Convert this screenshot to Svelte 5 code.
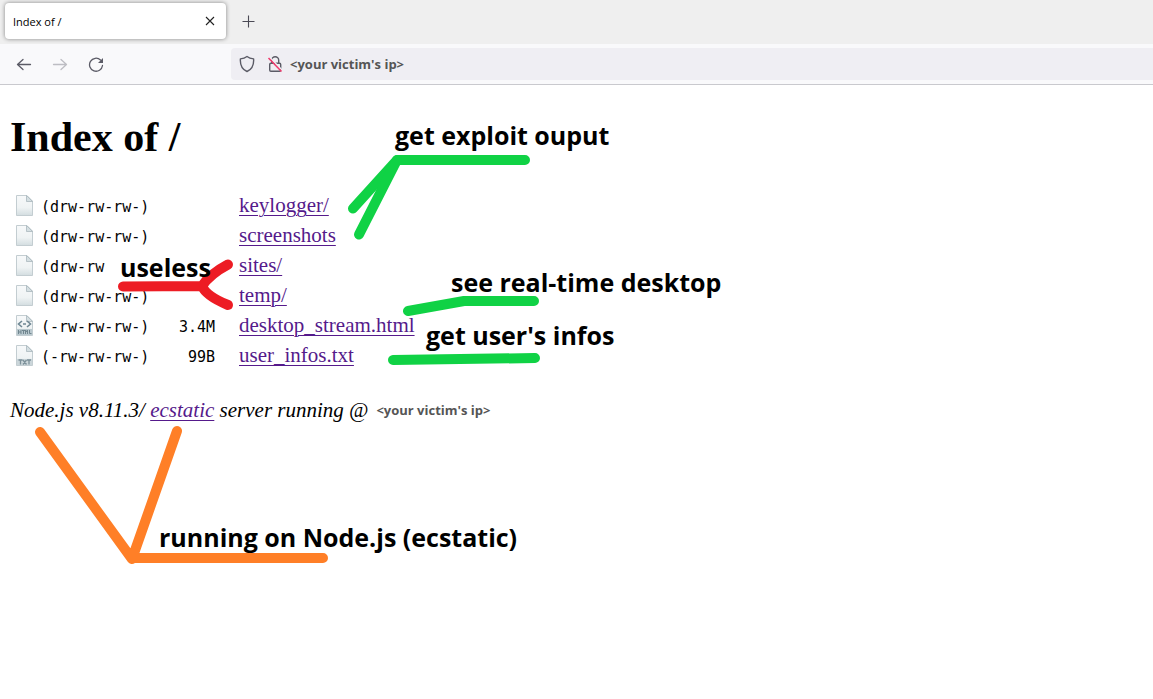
<script>
  const files = [
    { kind: 'file', perms: '(drw-rw-rw-)', size: '', name: 'keylogger/' },
    { kind: 'file', perms: '(drw-rw-rw-)', size: '', name: 'screenshots' },
    { kind: 'file', perms: '(drw-rw', size: '', name: 'sites/' },
    { kind: 'file', perms: '(drw-rw-rw-)', size: '', name: 'temp/' },
    { kind: 'html', perms: '(-rw-rw-rw-)', size: '3.4M', name: 'desktop_stream.html' },
    { kind: 'txt', perms: '(-rw-rw-rw-)', size: '99B', name: 'user_infos.txt' }
  ];

  const notes = [
    { text: 'get exploit ouput', x: 395, y: 117 },
    { text: 'useless', x: 120, y: 249 },
    { text: 'see real-time desktop', x: 451, y: 264 },
    { text: "get user's infos", x: 426, y: 317 },
    { text: 'running on Node.js (ecstatic)', x: 159, y: 519 }
  ];

  let address = $state("<your victim's ip>");
</script>

<div class="page">
  <header>
    <div class="tabs">
      <div class="tab">
        <span>Index of /</span>
        <button aria-label="Close tab">
          <svg width="10" height="10" viewBox="0 0 10 10"><path d="M1 1l8 8M9 1l-8 8" stroke="#222" stroke-width="1.1" fill="none" /></svg>
        </button>
      </div>
      <button class="new" aria-label="New tab">
        <svg width="13" height="13" viewBox="0 0 13 13"><path d="M6.500 .5v12M.5 6.500h12" stroke="#4b4a55" stroke-width="1.1" fill="none" /></svg>
      </button>
    </div>
    <nav class="toolbar">
      <div class="controls">
        <button aria-label="Back">
          <svg width="16" height="16" viewBox="0 0 16 16" fill="none" stroke="#5b5b66" stroke-width="1.3" stroke-linecap="round" stroke-linejoin="round"><path d="M14.500 8.500H1.500M7 3.500L1.500 8.500L7 13.500" /></svg>
        </button>
        <button aria-label="Forward" disabled>
          <svg width="16" height="16" viewBox="0 0 16 16" fill="none" stroke="#bdbdc3" stroke-width="1.3" stroke-linecap="round" stroke-linejoin="round"><path d="M1.500 8.500h13M9 3.500L14.500 8.500L9 13.500" /></svg>
        </button>
        <button aria-label="Reload">
          <svg width="16" height="16" viewBox="0 0 16 16" fill="none" stroke="#5b5b66" stroke-width="1.3" stroke-linecap="round"><path d="M14.500 9.500A6.500 6.500 0 1 1 12.500 4" /><path d="M15 2v5h-5z" fill="#5b5b66" stroke="none" /></svg>
        </button>
      </div>
      <div class="urlbar">
        <svg width="16" height="18" viewBox="0 0 16 18" fill="none" stroke="#5b5b66" stroke-width="1.4" stroke-linejoin="round"><path d="M8 1.500C6 3 3.800 3.600 1.400 3.900C1 9.500 3 14.300 8 16.500C13 14.300 15 9.500 14.600 3.900C12.200 3.600 10 3 8 1.500Z" /></svg>
        <svg width="16" height="18" viewBox="0 0 16 18" fill="none" stroke="#5b5b66" stroke-width="1.4"><rect x="2.700" y="8.200" width="11" height="8" rx="1.200" /><path d="M4.700 8V5.200a3.500 3.500 0 0 1 7 0V8" /><path d="M2.500 2L15.500 15.500" stroke="#efeef3" stroke-width="1.500" /><path d="M1.500 3L14.500 16.500" stroke="#f0386b" stroke-width="1.500" /></svg>
        <input type="text" aria-label="Address" bind:value={address} />
      </div>
    </nav>
  </header>

  <main>
    <h1>Index of /</h1>
    <table>
      <tbody>
        {#each files as f}
          <tr>
            <td class="icon">
              <svg width="17" height="21" viewBox="0 0 17 21">
                <defs>
                  <linearGradient id="paper" x1="0" y1="0" x2="0" y2="1">
                    <stop offset="0" stop-color="#f7f9fa" /><stop offset="0.600" stop-color="#eff3f4" /><stop offset="1" stop-color="#d3dde0" />
                  </linearGradient>
                </defs>
                <path d="M.5.5H11L16.500 6V20.500H.5Z" fill="url(#paper)" stroke="#c3cdd1" />
                <path d="M10.500.5V6.500H16.500Z" fill="#d5dfe2" stroke="#a9b8be" stroke-width="0.800" />
                {#if f.kind === 'html'}
                  <path d="M1 14h15v6H1z" fill="#b9c8ce" />
                  <path d="M6 6L2.500 9L6 12M11 6L14.500 9L11 12M7 9h3" fill="none" stroke="#6f8793" stroke-width="1.600" />
                  <path d="M2.500 15v4M5 15v4M2.500 17H5M6 15.500h3M7.500 15.500V19M9.500 19v-4l1 2l1-2v4M13.500 15v3.500h2" fill="none" stroke="#71868f" />
                {:else if f.kind === 'txt'}
                  <path d="M1 14h15v6H1z" fill="#cbd6da" />
                  <path d="M2.500 15h4M4.500 15v4.500M7 15l3.500 4.500M10.500 15L7 19.500M11 15h4M13 15v4.500" fill="none" stroke="#7d919a" stroke-width="1.300" />
                {/if}
              </svg>
            </td>
            <td class="perms">{f.perms}</td>
            <td class="size">{f.size}</td>
            <td class="name"><a href="#{f.name}">{f.name}</a></td>
          </tr>
        {/each}
      </tbody>
    </table>
    <address>
      <span>Node.js v8.11.3/ <a href="#ecstatic">ecstatic</a> server running @</span>
      <b>&lt;your victim's ip&gt;</b>
    </address>
  </main>

  <svg class="marks" fill="none" stroke-width="10" stroke-linecap="round" stroke-linejoin="round" aria-hidden="true">
    <g stroke="#10d245">
      <path d="M353 208.500L397 160H525" />
      <path d="M359 234.500L397 160" />
      <path d="M408 311L464 301L534 301" />
      <path d="M393 360L535 358" />
    </g>
    <path stroke="#ed1c24" d="M123 286.500L202 286Q210 274 228 264.500M202 286Q206 296 228 305" />
    <path stroke="#ff7f27" d="M40 432L132 559L177 431M132 558H323" />
  </svg>
  {#each notes as n}
    <span class="note" style="left: {n.x}px; top: {n.y}px">{n.text}</span>
  {/each}
</div>

<style>
  :global(body) {
    margin: 0;
    background: #fff;
  }
  .page {
    position: relative;
    min-height: 100vh;
    overflow: hidden;
    color: #000;
    font-family: "Liberation Serif", serif;
  }
  button {
    display: flex;
    align-items: center;
    justify-content: center;
    padding: 0;
    border: 0;
    background: none;
  }
  .tabs {
    display: flex;
    align-items: center;
    gap: 12px;
    height: 44px;
    box-sizing: border-box;
    padding: 0 5px 2px;
    background: #efefef;
  }
  .tab {
    display: flex;
    align-items: center;
    justify-content: space-between;
    width: 221px;
    height: 36px;
    box-sizing: border-box;
    padding: 0 8px;
    border-radius: 4px;
    background: #fff;
    box-shadow: 0 0 4px rgba(0, 0, 0, 0.45);
    font: 11px "Open Sans", sans-serif;
  }
  .tab button {
    width: 16px;
    height: 16px;
  }
  .new {
    width: 20px;
    height: 20px;
  }
  .toolbar {
    display: flex;
    align-items: center;
    height: 40px;
    background: #f9f9fb;
    border-bottom: 1px solid #c9c9ce;
  }
  .controls {
    display: flex;
    gap: 20px;
    width: 231px;
    box-sizing: border-box;
    padding-left: 16px;
  }
  .urlbar {
    display: flex;
    flex: 1;
    align-items: center;
    gap: 12px;
    height: 32px;
    box-sizing: border-box;
    padding-left: 8px;
    border-radius: 4px 0 0 4px;
    background: #efeef3;
  }
  .urlbar input {
    flex: 1;
    margin-left: -5px;
    padding: 0;
    border: 0;
    outline: 0;
    background: none;
    color: #555;
    font: bold 13px "Open Sans", sans-serif;
  }
  main {
    padding: 28px 10px;
  }
  h1 {
    margin: 0;
    font-size: 42px;
    line-height: 48px;
  }
  table {
    margin-top: 29px;
    border-collapse: collapse;
    font-size: 21px;
  }
  td {
    height: 30px;
    padding: 0;
    line-height: 30px;
    vertical-align: baseline;
  }
  .icon {
    width: 31px;
    vertical-align: middle;
  }
  .icon svg {
    display: block;
    margin-left: 6px;
  }
  .perms,
  .size {
    font-family: "DejaVu Sans Mono", monospace;
    font-size: 15px;
    line-height: 24px;
    white-space: pre;
  }
  .perms {
    width: 114px;
  }
  .size {
    width: 60px;
    text-align: right;
  }
  .name {
    padding-left: 24px;
  }
  a {
    color: #551a8b;
    text-decoration-thickness: 1px;
    text-underline-offset: 3px;
  }
  address {
    display: flex;
    align-items: center;
    gap: 8px;
    margin-top: 25px;
    font-size: 21px;
    line-height: 30px;
  }
  address b {
    color: #555;
    font: bold 13px "Open Sans", sans-serif;
  }
  .marks {
    position: absolute;
    inset: 0;
    width: 100%;
    height: 100%;
    pointer-events: none;
  }
  .note {
    position: absolute;
    font: bold 25px/36px "Open Sans", sans-serif;
    white-space: nowrap;
  }
</style>
